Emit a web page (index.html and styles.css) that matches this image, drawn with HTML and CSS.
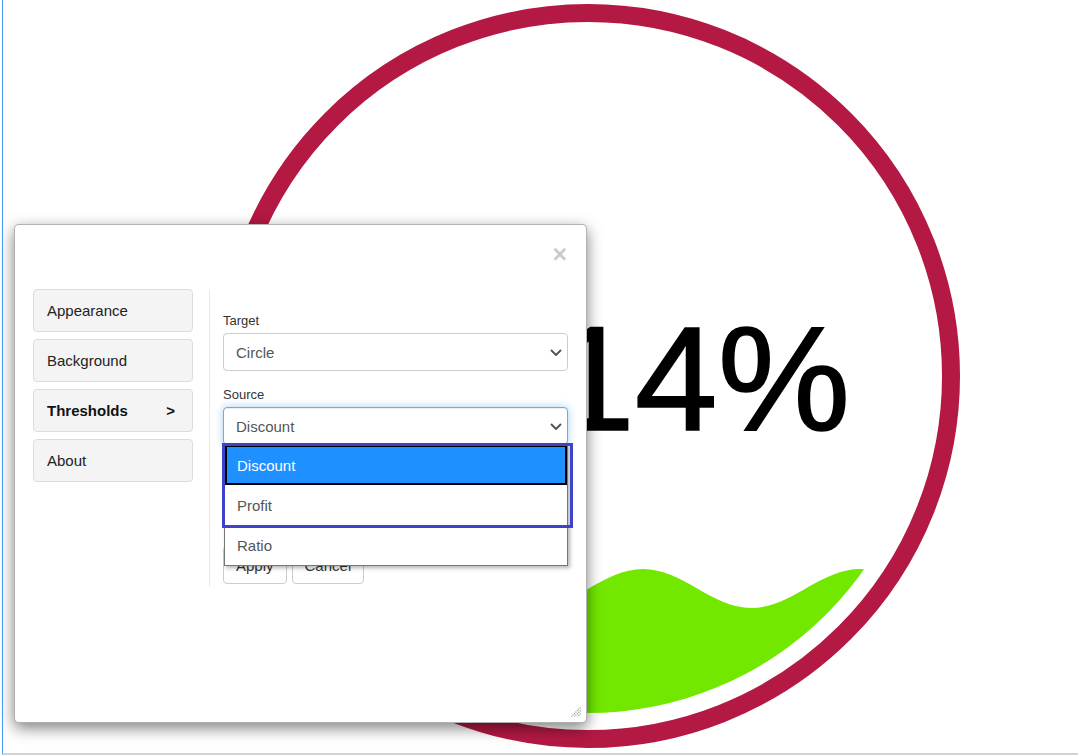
FILE: index.html
```html
<!DOCTYPE html>
<html lang="en">
<head>
<meta charset="utf-8">
<title>Gauge settings</title>
<link rel="stylesheet" href="styles.css">
</head>
<body>
<div class="stage">
  <svg class="chart" width="1075" height="753" viewBox="3 0 1075 753" xmlns="http://www.w3.org/2000/svg">
    <defs>
      <clipPath id="inner"><circle cx="588" cy="376" r="337"/></clipPath>
    </defs>
    <g clip-path="url(#inner)">
      <path class="wave" d="M 100 608 C 139.5 608 169 569 209 569 C 248.5 569 278 608 317.5 608 C 357 608 386.5 569 426 569 C 465.5 569 495 608 534.5 608 C 574 608 603.5 569 643 569 C 682.5 569 712 608 751.5 608 C 791 608 820.5 569 860 569 C 899.5 569 929 608 968.5 608 L 968.5 760 L 100 760 Z"/>
    </g>
    <circle class="ring" cx="588" cy="376" r="363"/>
  </svg>
  <div class="value">14%</div>
</div>

<div class="dialog">
  <div class="dlg-head">
    <button class="close" type="button">×</button>
  </div>
  <div class="dlg-body">
    <nav class="tabs">
      <div class="tab">Appearance</div>
      <div class="tab">Background</div>
      <div class="tab active"><span>Thresholds</span><span>&gt;</span></div>
      <div class="tab">About</div>
    </nav>
    <div class="pane">
      <div class="group">
        <label class="lbl">Target</label>
        <div class="field">
          <div class="select"><span>Circle</span>
            <svg class="chev" width="12" height="7" viewBox="0 0 12 7"><path d="M1 1 L6 6 L11 1"/></svg>
          </div>
        </div>
      </div>
      <div class="group">
        <label class="lbl">Source</label>
        <div class="field">
          <div class="select focus"><span>Discount</span>
            <svg class="chev" width="12" height="7" viewBox="0 0 12 7"><path d="M1 1 L6 6 L11 1"/></svg>
          </div>
          <div class="listbox">
            <div class="opt selected">Discount</div>
            <div class="opt">Profit</div>
            <div class="opt">Ratio</div>
          </div>
          <div class="mark"></div>
        </div>
      </div>
      <div class="actions">
        <button class="btn" type="button">Apply</button>
        <button class="btn" type="button">Cancel</button>
      </div>
    </div>
  </div>
  <svg class="grip" width="10" height="10" viewBox="0 0 10 10">
    <path d="M9.5 0.5 L0.5 9.5 M9.5 3.5 L3.5 9.5 M9.5 6.5 L6.5 9.5"/>
  </svg>
</div>
</body>
</html>
```

FILE: styles.css
```css
html, body {
  margin: 0;
  padding: 0;
  background: #fff;
}

body {
  font-family: "Liberation Sans", Arial, sans-serif;
  color: #222;
  width: 1078px;
  height: 755px;
  overflow: hidden;
}

.stage {
  margin-left: 2px;
  border-left: 1px solid #4a9af5;
  border-bottom: 2px solid #d2d2d2;
  box-sizing: border-box;
  height: 755px;
}

.chart {
  display: block;
}

.wave {
  fill: #72e800;
}

.ring {
  fill: none;
  stroke: #b31942;
  stroke-width: 18;
}

.value {
  position: absolute;
  left: 552px;
  top: 304px;
  font-family: "Liberation Sans", Arial, sans-serif;
  font-size: 149px;
  line-height: 149px;
  color: #000;
  -webkit-text-stroke: 1.5px #000;
  white-space: nowrap;
}

.dialog {
  position: absolute;
  left: 14px;
  top: 224px;
  width: 573px;
  height: 499px;
  box-sizing: border-box;
  background: #fff;
  border: 1px solid rgba(0, 0, 0, 0.3);
  border-radius: 5px;
  box-shadow: 0 5px 15px rgba(0, 0, 0, 0.5);
}

.dlg-head {
  height: 64px;
  box-sizing: border-box;
  display: flex;
  justify-content: flex-end;
  align-items: flex-start;
  padding: 17px 19px 0 0;
}

.close {
  border: 0;
  background: none;
  padding: 0;
  font-family: "Liberation Sans", Arial, sans-serif;
  font-size: 25px;
  font-weight: 700;
  line-height: 1;
  color: #000;
  opacity: 0.2;
  cursor: pointer;
}

.dlg-body {
  display: flex;
  padding: 0 18px;
}

.tabs {
  width: 160px;
  display: flex;
  flex-direction: column;
  gap: 7px;
}

.tab {
  height: 43px;
  box-sizing: border-box;
  border: 1px solid #dcdcdc;
  border-radius: 4px;
  background: #f4f4f4;
  padding: 0 17px 0 13px;
  display: flex;
  align-items: center;
  justify-content: space-between;
  font-size: 15px;
  color: #222;
}

.tab.active {
  font-weight: 700;
  color: #111;
}

.pane {
  flex: 1;
  margin-left: 16px;
  border-left: 1px solid #e8e8e8;
  padding: 23px 0 3px 13px;
}

.group {
  margin-bottom: 15px;
}

.lbl {
  display: block;
  font-size: 13px;
  line-height: 18px;
  margin-bottom: 3px;
  color: #333;
}

.field {
  position: relative;
}

.select {
  height: 38px;
  box-sizing: border-box;
  border: 1px solid #ccc;
  border-radius: 4px;
  padding: 0 5px 0 12px;
  display: flex;
  align-items: center;
  justify-content: space-between;
  font-size: 15px;
  color: #555;
  background: #fff;
}

.select.focus {
  border-color: #66afe9;
  box-shadow: inset 0 1px 1px rgba(0, 0, 0, 0.075), 0 0 8px rgba(102, 175, 233, 0.6);
}

.chev path {
  fill: none;
  stroke: #555;
  stroke-width: 2;
}

.listbox {
  position: absolute;
  left: 1px;
  top: 37px;
  width: 344px;
  box-sizing: border-box;
  border: 1px solid #767676;
  background: #fff;
  box-shadow: 2px 2px 4px rgba(0, 0, 0, 0.3);
}

.opt {
  height: 40px;
  box-sizing: border-box;
  padding-left: 12px;
  display: flex;
  align-items: center;
  font-size: 15px;
  color: #555;
}

.opt.selected {
  background: #1e90ff;
  color: #fff;
  outline: 2px solid #000;
  outline-offset: -2px;
}

.mark {
  position: absolute;
  left: -1px;
  top: 36px;
  width: 351px;
  height: 85px;
  box-sizing: border-box;
  border: 3px solid #3d44c9;
}

.actions {
  margin-top: 101px;
  display: flex;
  gap: 5px;
}

.btn {
  height: 38px;
  box-sizing: border-box;
  padding: 0 12px;
  border: 1px solid #ccc;
  border-radius: 4px;
  background: #fff;
  font-family: "Liberation Sans", Arial, sans-serif;
  font-size: 15px;
  color: #333;
}

.grip {
  position: absolute;
  right: 5px;
  bottom: 5px;
}

.grip path {
  stroke: #8a8a8a;
  stroke-width: 1.2;
  stroke-dasharray: 1 1;
}
```
